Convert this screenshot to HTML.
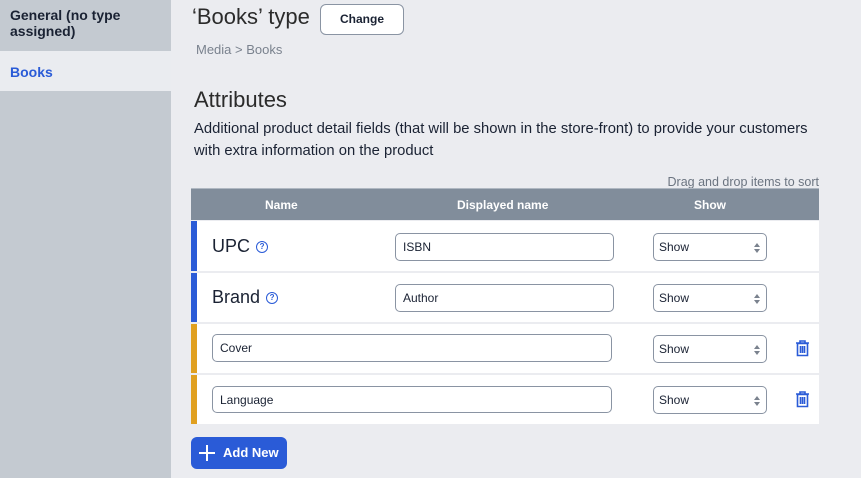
<!DOCTYPE html>
<html><head><style>
*{box-sizing:border-box;margin:0;padding:0}
body{width:861px;height:478px;overflow:hidden;background:#ebecf0;font-family:"Liberation Sans",sans-serif;position:relative;color:#1f2937}
.side{position:absolute;left:0;top:0;width:171px;height:478px;background:#c4cad1}
.side .g{position:absolute;left:10px;top:7px;font-weight:bold;font-size:14px;line-height:16px;color:#1a2233}
.side .b{position:absolute;left:0;top:51px;width:171px;height:40px;background:#eaecf0;font-weight:bold;color:#2a5bd7;font-size:14px;padding:13px 10px}
.abs{position:absolute}
.inp{position:absolute;background:#fff;border:1px solid #8a94a3;border-radius:5px;font-size:12px;padding:0 7px;display:flex;align-items:center;color:#1a2233}
.sel{position:absolute;width:114px;height:28px;background:#fff;border:1px solid #8a94a3;border-radius:5px;font-size:12px;padding:0 5px;display:flex;align-items:center;color:#1a2233}
.sel:after{content:"";position:absolute;right:6px;top:9px;border:3px solid transparent;border-bottom:4px solid #7a828e;border-top:0}
.sel:before{content:"";position:absolute;right:6px;top:15px;border:3px solid transparent;border-top:4px solid #7a828e;border-bottom:0}
.row{position:absolute;left:191px;width:628px;background:#fff}
.q{display:inline-block;width:12px;height:12px;border:1.3px solid #2a5bd7;border-radius:50%;font-size:8px;color:#2a5bd7;text-align:center;line-height:10px;font-weight:bold;vertical-align:middle;margin-left:6px}
</style></head><body>
<div class="side"><div class="g">General (no type<br>assigned)</div><div class="b">Books</div></div>
<div class="abs" style="left:192px;top:4px;font-size:22px;color:#2b2b2b">‘Books’ type</div>
<div class="abs" style="left:320px;top:4px;width:84px;height:31px;background:#fff;border:1px solid #8a94a3;border-radius:6px;font-size:12px;font-weight:bold;text-align:center;line-height:29px;color:#1a2233">Change</div>
<div class="abs" style="left:196px;top:42px;font-size:13px;color:#7a828e">Media &gt; Books</div>
<div class="abs" style="left:194px;top:87px;font-size:22px;color:#2b2b2b">Attributes</div>
<div class="abs" style="left:194px;top:118px;font-size:14.8px;line-height:22px;color:#1a2233;white-space:nowrap">Additional product detail fields (that will be shown in the store-front) to provide your customers<br>with extra information on the product</div>
<div class="abs" style="right:42px;top:175px;font-size:12.5px;color:#6b7480">Drag and drop items to sort</div>
<div class="row" style="top:188px;height:32px;background:#818d9b;color:#fff;font-weight:bold;font-size:12px;border-top:1px solid #b0b8c2">
<span class="abs" style="left:74px;top:9px">Name</span><span class="abs" style="left:266px;top:9px">Displayed name</span><span class="abs" style="left:503px;top:9px">Show</span></div>
<div class="row" style="top:221px;height:50px;border-left:6px solid #2a5bd7"><span class="abs" style="left:15px;top:15px;font-size:18px;color:#1a2233">UPC<span class="q">?</span></span></div>
<div class="row" style="top:273px;height:49px;border-left:6px solid #2a5bd7"><span class="abs" style="left:15px;top:14px;font-size:18px;color:#1a2233">Brand<span class="q">?</span></span></div>
<div class="row" style="top:324px;height:49px;border-left:6px solid #e0a020"></div>
<div class="row" style="top:375px;height:49px;border-left:6px solid #e0a020"></div>
<div class="inp" style="left:395px;top:233px;width:219px;height:28px">ISBN</div>
<div class="inp" style="left:395px;top:284px;width:219px;height:28px">Author</div>
<div class="inp" style="left:212px;top:334px;width:400px;height:28px">Cover</div>
<div class="inp" style="left:212px;top:386px;width:400px;height:27px">Language</div>
<div class="sel" style="left:653px;top:233px">Show</div>
<div class="sel" style="left:653px;top:284px">Show</div>
<div class="sel" style="left:653px;top:335px">Show</div>
<div class="sel" style="left:653px;top:386px">Show</div>
<svg class="abs" style="left:795px;top:340px" width="15" height="17" viewBox="0 0 15 17"><path d="M1 3h13M5 3V1h5v2M2.5 3.5h10v12h-10z M5.5 6v7M7.5 6v7M9.5 6v7" fill="none" stroke="#2a5bd7" stroke-width="1.6"/></svg>
<svg class="abs" style="left:795px;top:391px" width="15" height="17" viewBox="0 0 15 17"><path d="M1 3h13M5 3V1h5v2M2.5 3.5h10v12h-10z M5.5 6v7M7.5 6v7M9.5 6v7" fill="none" stroke="#2a5bd7" stroke-width="1.6"/></svg>
<div class="abs" style="left:191px;top:437px;width:96px;height:32px;background:#2a5bd7;border-radius:6px;color:#fff;font-weight:bold;font-size:13px;line-height:32px;padding-left:32px">Add New
<svg class="abs" style="left:8px;top:8px" width="16" height="16"><path d="M8 0v16M0 8h16" stroke="#fff" stroke-width="2"/></svg></div>
</body></html>
